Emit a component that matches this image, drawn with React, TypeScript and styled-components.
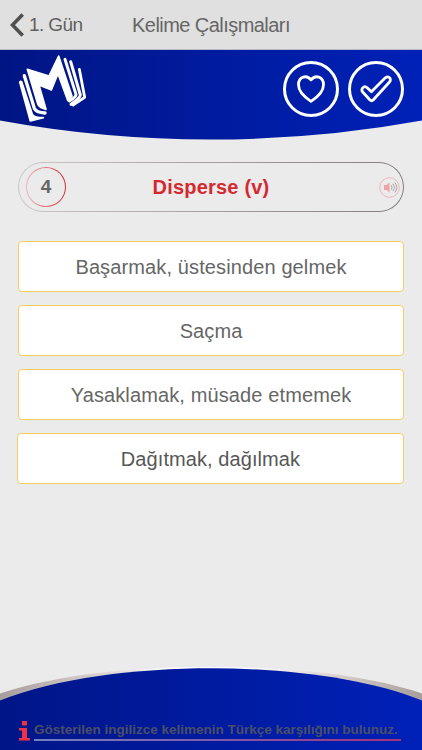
import React from "react";
import styled, { createGlobalStyle } from "styled-components";

const GlobalStyle = createGlobalStyle`
  * { box-sizing: border-box; }
  body { margin: 0; background: #ebebeb; font-family: "Liberation Sans", Arial, sans-serif; color: #666; }
  button { font: inherit; color: inherit; background: none; border: 0; padding: 0; }
  svg { display: block; }
`;

const Screen = styled.div`
  width: 422px;
  height: 750px;
  display: flex;
  flex-direction: column;
  overflow: hidden;
  background: #ebebeb;
`;

const NavBar = styled.header`
  height: 50px;
  flex: none;
  display: grid;
  grid-template-columns: 94px 234px 94px;
  align-items: center;
  background: #e0e0e0;
  border-bottom: 1px solid #b9bac6;
`;

const BackButton = styled.button`
  display: flex;
  align-items: center;
  gap: 5px;
  padding-left: 10px;
`;

const Label = styled.span<{ $size: number; $spacing: number; $weight?: number; $color?: string }>`
  font-size: ${(p) => p.$size}px;
  letter-spacing: ${(p) => p.$spacing}px;
  font-weight: ${(p) => p.$weight ?? 400};
  color: ${(p) => p.$color ?? "#666"};
  white-space: nowrap;
  line-height: 24px;
`;

const Title = styled.h1`
  margin: 0;
  display: flex;
  justify-content: center;
`;

const Hero = styled.section`
  position: relative;
  height: 90px;
  flex: none;
  display: flex;
  justify-content: space-between;
  padding: 0 18px;
`;

const Backdrop = styled.svg`
  position: absolute;
  inset: 0;
`;

const Logo = styled.svg`
  position: relative;
  margin-top: 4px;
`;

const Actions = styled.div`
  position: relative;
  display: flex;
  gap: 9px;
  padding-top: 11px;
`;

const RoundButton = styled.button`
  width: 56px;
  height: 56px;
  border: 3px solid #fff;
  border-radius: 50%;
  display: grid;
  place-items: center;
`;

const Quiz = styled.main`
  flex: 1;
  padding: 22px 18px 0;
`;

const WordCard = styled.div`
  height: 50px;
  display: grid;
  grid-template-columns: 40px 1fr 40px;
  align-items: center;
  padding: 0 3px 0 7px;
  border: 1px solid transparent;
  border-radius: 25px;
  background:
    linear-gradient(#ebebeb, #ebebeb) padding-box,
    linear-gradient(90deg, #cdc8c9, #aaa0a2 45%, #857b7d) border-box;
`;

const Counter = styled.div`
  width: 40px;
  height: 40px;
  display: grid;
  place-items: center;
  border: 1.5px solid transparent;
  border-radius: 50%;
  background:
    linear-gradient(#ebebeb, #ebebeb) padding-box,
    linear-gradient(90deg, #efb8bc, #cf303b) border-box;
`;

const Word = styled.div`
  display: flex;
  justify-content: center;
  padding-right: 4px;
`;

const SoundButton = styled.button`
  justify-self: end;
`;

const Options = styled.div`
  display: flex;
  flex-direction: column;
  gap: 13px;
  padding-top: 29px;
`;

const Option = styled.button<{ $active?: boolean }>`
  height: 51px;
  margin-left: ${(p) => (p.$active ? -1 : 0)}px;
  display: flex;
  align-items: center;
  justify-content: center;
  border: 1px solid #f6cd5e;
  border-radius: 4px;
  background: #fff;
`;

const Footer = styled.footer`
  position: relative;
  height: 84px;
  flex: none;
  display: flex;
  align-items: flex-start;
  gap: 4px;
  padding: 54px 0 0 19px;
`;

const InfoIcon = styled.svg`
  position: relative;
  margin-top: 1px;
`;

const Hint = styled.div`
  position: relative;
  width: 367px;
  height: 21px;
  display: flex;
  align-items: center;
  border-bottom: 2px solid;
  border-image: linear-gradient(90deg, #7182bd, #805aac 50%, #a83073) 1;
`;

const options = [
  { text: "Başarmak, üstesinden gelmek", spacing: 0.12 },
  { text: "Saçma", spacing: 0.1 },
  { text: "Yasaklamak, müsade etmemek", spacing: 0.12 },
  { text: "Dağıtmak, dağılmak", spacing: 0.08, active: true },
];

export default function App() {
  return (
    <>
      <GlobalStyle />
      <Screen>
        <NavBar>
          <BackButton>
            <svg width="14" height="24" viewBox="0 0 14 24" fill="none" stroke="#505050" strokeWidth="3.6">
              <path d="M12.7 1.4 2.5 12l10.2 10.6" />
            </svg>
            <Label $size={19} $spacing={-0.6} $color="#606060">1. Gün</Label>
          </BackButton>
          <Title>
            <Label $size={20} $spacing={-0.55}>Kelime Çalışmaları</Label>
          </Title>
        </NavBar>

        <Hero>
          <Backdrop width="422" height="90" viewBox="0 0 422 90">
            <defs>
              <linearGradient id="heroBlue">
                <stop offset="0" stopColor="#001584" />
                <stop offset="1" stopColor="#0021b8" />
              </linearGradient>
            </defs>
            <path d="M0 0H422V70.5Q318 89.5 211 89.5T0 70.5Z" fill="url(#heroBlue)" />
          </Backdrop>
          <Logo width="69" height="70" viewBox="54 27 207 210" fill="none" stroke="#fff" strokeLinecap="round" strokeLinejoin="round">
            <path d="M82 73 147 93 176 33 216 154 203 166 174 86 154 135 117 120 138 193Q120 190 114 179Z" fill="#fff" strokeWidth="5" />
            <path d="M73 92 103 190Q108 202 135 204" strokeWidth="10" />
            <path d="M59 111 91 228 130 218Q103 218 97 208L65 110Q61 107 59 111Z" fill="#fff" strokeWidth="5" />
            <path d="M195 43 228 148Q229 156 208 168" strokeWidth="9" />
            <path d="M212 50 241 150Q241 158 213 178" strokeWidth="9" />
            <path d="M238 73 254 157 219 180" strokeWidth="8.5" />
          </Logo>
          <Actions>
            <RoundButton aria-label="Favori">
              <svg width="28" height="28" viewBox="0 0 28 28" fill="none" stroke="#fff" strokeWidth="2.8" strokeLinejoin="round">
                <path d="M14 26.4C9.5 23.5 1.5 17.5 1.5 9.8 1.5 1.2 9.8-.5 14 4.8 18.2-.5 26.5 1.2 26.5 9.8 26.5 17.5 18.5 23.5 14 26.4Z" />
              </svg>
            </RoundButton>
            <RoundButton aria-label="Tamam">
              <svg width="32" height="28" viewBox="0 0 32 28" fill="none" stroke="#fff" strokeWidth="2.8" strokeLinejoin="round">
                <path d="M2.4 13.2Q4.5 10.2 7.2 12.7L11.4 16.8 25.3 2.8Q28 .8 30 3.2 31 5.6 29.3 7.3L13.4 24.8Q11.6 26.6 9.7 24.8L2.7 17Q1.2 15.2 2.4 13.2Z" />
              </svg>
            </RoundButton>
          </Actions>
        </Hero>

        <Quiz>
          <WordCard>
            <Counter><Label $size={19} $spacing={0} $weight={700}>4</Label></Counter>
            <Word><Label $size={20} $spacing={0.2} $weight={700} $color="#d3292f">Disperse (v)</Label></Word>
            <SoundButton aria-label="Dinle">
              <svg width="21" height="21" viewBox="0 0 21 21" fill="none">
                <circle cx="10.5" cy="10.5" r="9.8" stroke="#edb7ba" />
                <path d="M5 8H7.5L10.5 5.5V15.5L7.5 13H5Z" fill="#efa4a8" />
                <path d="M12.2 8.3Q13.8 10.5 12.2 12.7M14 6.8Q17 10.5 14 14.2M15.9 5.5Q19.7 10.5 15.9 15.5" stroke="#aaa5a6" />
              </svg>
            </SoundButton>
          </WordCard>
          <Options>
            {options.map((option) => (
              <Option key={option.text} $active={option.active}>
                <Label $size={20} $spacing={option.spacing} $color={option.active ? "#575757" : "#666"}>{option.text}</Label>
              </Option>
            ))}
          </Options>
        </Quiz>

        <Footer>
          <Backdrop width="422" height="84" viewBox="0 0 422 84">
            <defs>
              <linearGradient id="footerBlue">
                <stop offset="0" stopColor="#001587" />
                <stop offset="1" stopColor="#0021b8" />
              </linearGradient>
              <linearGradient id="rim">
                <stop offset="0" stopColor="#a69e9c" />
                <stop offset=".25" stopColor="#ddd4d2" />
                <stop offset=".4" stopColor="#fff" />
                <stop offset=".58" stopColor="#fff" />
                <stop offset=".78" stopColor="#ddd4d2" />
                <stop offset="1" stopColor="#a69e9c" />
              </linearGradient>
            </defs>
            <path d="M0 27.5C58 8 137 1 211 1S364 8 422 27.5V84H0Z" fill="url(#rim)" />
            <path d="M0 34.5C56 12 137 2.2 211 2.2S366 12 422 34.5V84H0Z" fill="url(#footerBlue)" />
          </Backdrop>
          <InfoIcon width="11" height="20" viewBox="0 0 11 20" fill="#ed3343">
            <path d="M3 0H8V4.5H3ZM0 7H8V17H11V19.5H0V17H3V9.5H0Z" />
          </InfoIcon>
          <Hint>
            <Label $size={13.5} $spacing={0} $weight={700} $color="#4c4e68">
              Gösterilen ingilizce kelimenin Türkçe karşılığını bulunuz.
            </Label>
          </Hint>
        </Footer>
      </Screen>
    </>
  );
}
